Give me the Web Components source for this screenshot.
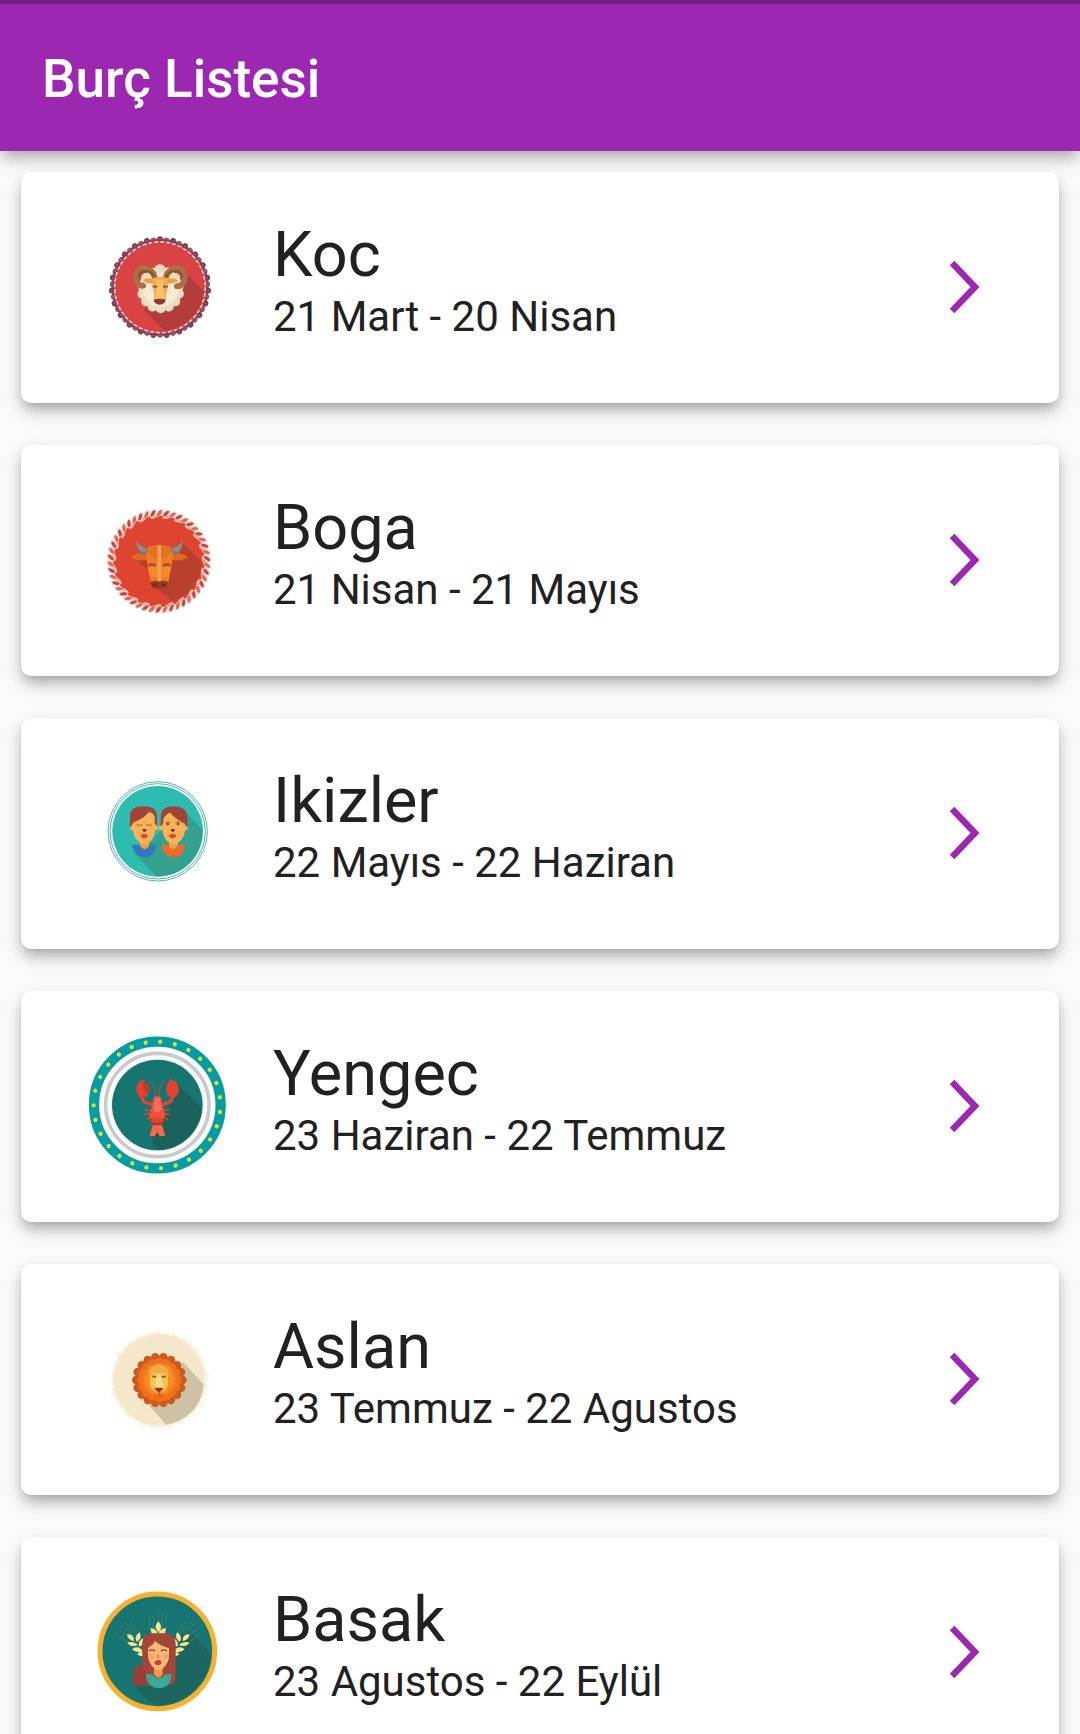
<!DOCTYPE html>
<html lang="tr">
<head>
<meta charset="utf-8">
<meta name="viewport" content="width=device-width, initial-scale=1">
<title>Burç Listesi</title>
<style>
  body { margin: 0; font-family: Roboto, "Noto Sans", sans-serif; color: #212121; background: #fafafa; }
</style>
</head>
<body>
<burc-app>
  <app-bar slot="bar">Burç Listesi</app-bar>
  <burc-card sign="koc">Koc<span slot="date">21 Mart - 20 Nisan</span></burc-card>
  <burc-card sign="boga">Boga<span slot="date">21 Nisan - 21 Mayıs</span></burc-card>
  <burc-card sign="ikizler">Ikizler<span slot="date">22 Mayıs - 22 Haziran</span></burc-card>
  <burc-card sign="yengec">Yengec<span slot="date">23 Haziran - 22 Temmuz</span></burc-card>
  <burc-card sign="aslan">Aslan<span slot="date">23 Temmuz - 22 Agustos</span></burc-card>
  <burc-card sign="basak">Basak<span slot="date">23 Agustos - 22 Eylül</span></burc-card>
</burc-app>

<script>
// Repeats a shape n times around a centre point.
const ring = (n, cx, cy, shape, start = 0) =>
  Array.from({ length: n }, (_, i) =>
    `<g transform="translate(${cx} ${cy}) rotate(${start + i * 360 / n})">${shape(i)}</g>`).join('');

const ART = {
  koc: { view: '0 -7 480 480', art: `
    <circle cx="240" cy="234" r="142" fill="none" stroke="#8a4a60" stroke-width="8"/>
    ${ring(46, 240, 234, i => `<circle cy="${i % 2 ? -142 : -145}" r="8.5" fill="${i % 2 ? '#8f4a60' : '#7b3c54'}"/><circle cy="-145" r="2.5" fill="#b0607a"/>`)}
    <circle cx="240" cy="234" r="138" fill="#d94343"/>
    <circle cx="240" cy="234" r="136" fill="none" stroke="#fbeaea" stroke-width="4" stroke-dasharray="11 6.8"/>
    <path d="M318 192 L371 246 A132 132 0 0 1 255 365 L190 302 Z" fill="#b33d3a"/>
    <g fill="#ecdcc0">
      <circle cx="240" cy="183" r="18"/><circle cx="217" cy="190" r="14"/><circle cx="264" cy="188" r="14"/>
      <ellipse cx="242" cy="238" rx="66" ry="62"/>
      ${ring(14, 242, 241, () => '<circle cy="-56" r="15"/>')}
    </g>
    <ellipse cx="242" cy="242" rx="53" ry="50" fill="#f5ead5"/>
    <g fill="none" stroke-linecap="round">
      <path d="M224 203 C214 168 168 168 168 204 C168 220 178 231 189 229" stroke="#ab6f45" stroke-width="18"/>
      <path d="M258 203 C268 168 314 168 314 204 C314 220 304 231 291 231" stroke="#ab6f45" stroke-width="18"/>
      <path d="M223 203 C212 178 177 182 176 202" stroke="#85552f" stroke-width="7"/>
      <path d="M259 203 C270 178 305 182 306 202" stroke="#85552f" stroke-width="7"/>
    </g>
    <path d="M188 215 C199 203 216 207 226 212 L226 223 Q205 225 188 215Z M294 215 C283 203 266 207 256 212 L256 223 Q277 225 294 215Z" fill="#f29b43"/>
    <path d="M218 207 Q241 198 264 207 L264 232 Q257 250 257 271 L223 271 Q224 250 218 232Z" fill="#f6aa50"/>
    <path d="M231 211 L249 211 L254 270 L227 270Z" fill="#fac06c"/>
    <path d="M218 232 h14 M249 232 h14" stroke="#8a4a2b" stroke-width="5"/>
    <path d="M221 271 Q239 266 257 271 Q255 285 239 286 Q223 285 221 271Z" fill="#93352c"/>` },

  boga: { view: '0 0 480 480', art: `
    <circle cx="237" cy="244" r="138" fill="#df4431"/>
    ${ring(46, 237, 244, i => `<path d="M-9 -139 Q0 -160 12 -154 Q10 -137 -5 -133Z" fill="${i % 2 ? '#c9463f' : '#e0685c'}" stroke="#fbd9d2" stroke-width="3"/><path d="M-8 -130 Q3 -141 12 -133 Q4 -126 -8 -130Z" fill="${i % 2 ? '#f6beb1' : '#df4431'}"/>`)}
    <path d="M303 184 L366 247 A130 130 0 0 1 279 364 L214 313 L239 259Z" fill="#b8402e"/>
    <path d="M158 230 L211 275 L197 220Z" fill="#b8402e"/>
    <path d="M153 231 Q178 212 206 226 L199 239 Q166 246 153 231Z M323 231 Q298 212 270 226 L277 239 Q310 246 323 231Z" fill="#e0691f"/>
    <path d="M170 180 Q177 203 205 201 L199 229 Q165 219 170 180Z M307 180 Q300 203 272 201 L278 229 Q312 219 307 180Z" fill="#7f766e"/>
    <path d="M170 180 Q169 212 192 218 L198 206 Q178 200 170 180Z M307 180 Q308 212 285 218 L279 206 Q299 200 307 180Z" fill="#978c83"/>
    <path d="M205 202 Q238 188 272 202 L280 225 L265 309 L213 309 L197 225Z" fill="#f17b22"/>
    <path d="M200 212 Q210 198 237 196 Q267 198 277 212 Q264 236 238 238 Q213 236 200 212Z" fill="#e57224"/>
    <path d="M202 262 H274 L266 290 H210Z" fill="#f58a2c"/>
    <path d="M233 196 h10 v108 h-10Z" fill="#f9a055"/>
    <path d="M206 256 q11 -6 20 1 M250 257 q11 -7 20 -1" fill="none" stroke="#a43b22" stroke-width="7"/>
    <path d="M210 307 Q223 298 237 305 Q252 298 266 307 L258 325 H218Z" fill="#923927"/>
    <path d="M220 314 h10 M246 314 h10" stroke="#612a25" stroke-width="6"/>` },

  ikizler: { view: '0 10 480 480', art: `
    <circle cx="233" cy="245" r="149" fill="#fff" stroke="#55b6a8" stroke-width="3"/>
    <circle cx="233" cy="245" r="143" fill="none" stroke="#55b6a8" stroke-width="3"/>
    <circle cx="233" cy="245" r="136" fill="#2fbcb0"/>
    <path d="M312 184 L367 240 A135 135 0 0 1 240 380 L228 379 L163 311 L210 278 L245 240Z" fill="#34a090"/>
    <path d="M156 285 H176 Q193 306 211 285 H230 Q224 323 193 323 Q162 321 156 285Z" fill="#3178bc"/>
    <path d="M244 285 H264 Q281 306 299 285 H316 Q310 323 280 323 Q250 321 244 285Z" fill="#ec6b26"/>
    <path d="M181 270 h26 v19 q-13 20 -26 0Z M267 270 h26 v19 q-13 20 -26 0Z" fill="#f0a045"/>
    <g fill="#fbb157">
      <path d="M155 190 H226 V240 Q222 278 193 284 Q164 278 158 241 Q147 242 151 226Z"/><circle cx="228" cy="234" r="7"/>
      <path d="M246 190 H316 V240 Q311 278 280 284 Q252 278 247 241Z"/><circle cx="243" cy="235" r="7"/><circle cx="317" cy="235" r="7"/>
    </g>
    <path d="M150 235 V199 Q150 170 190 170 Q230 168 231 200 V229 L224 221 V199 Q213 186 207 185 Q198 204 161 218Z" fill="#a04437"/>
    <path d="M242 231 V200 Q243 169 282 170 Q321 171 322 203 V234 L314 222 Q283 207 270 188 Q261 193 251 204 L249 222Z" fill="#a04437"/>
    <path d="M170 225 q9 5 17 0 M199 225 q9 5 17 0 M256 219 q8 -5 15 0 M286 219 q8 -5 15 0" fill="none" stroke="#a85a30" stroke-width="3"/>
    <circle cx="263" cy="223" r="4" fill="#80422c"/><circle cx="294" cy="223" r="4" fill="#80422c"/>
    <path d="M187 238 h13 l-3 8 h-7Z M272 238 h13 l-3 8 h-7Z" fill="#782f28"/>
    <path d="M182 257 Q193 248 204 257 Q202 267 193 266 Q184 267 182 257Z M267 257 Q278 248 289 257 Q287 267 278 266 Q269 267 267 257Z" fill="#d9472f"/>` },

  yengec: { view: '0 4 480 480', art: `
    <circle cx="232" cy="241" r="190" fill="#fff" stroke="#069ca4" stroke-width="31"/>
    ${ring(27, 231, 241, () => `<circle cy="-190" r="6.5" fill="#e0dc35"/>`, 3)}
    <circle cx="232" cy="241" r="155" fill="none" stroke="#cbcaca" stroke-width="11"/>
    <circle cx="232" cy="241" r="143" fill="#f3f5fa"/>
    <circle cx="232" cy="241" r="136" fill="#177571"/>
    <path d="M294 180 L365 252 A136 136 0 0 1 235 377 L218 365 L218 330 L246 285Z" fill="#1a625b"/>
    <g fill="none" stroke="#df4430" stroke-linecap="round">
      <path d="M228 217 Q229 188 211 170 M237 217 Q235 185 252 168" stroke-width="2.5"/>
      <path d="M185 218 L191 231 L218 240 M278 218 L272 231 L248 240" stroke-width="10"/>
      <path d="M196 256 L214 257 M267 256 L250 257 M196 269 L214 266 M267 269 L250 266 M202 284 L217 274 M262 284 L246 274" stroke-width="5"/>
    </g>
    <path d="M196 164 Q168 167 169 195 Q171 217 188 220 Q207 215 207 194 Q207 176 201 174 Q194 184 190 183Z M267 164 Q295 167 297 194 Q296 217 278 219 Q257 214 258 194 Q260 176 265 174Z" fill="#e4422f"/>
    <path d="M196 164 Q180 180 195 204 Q206 207 207 194 Q207 176 201 174 Q192 186 190 183Z" fill="#c9382a"/>
    <path d="M221 218 Q231 210 242 218 L256 274 Q245 289 231 291 Q217 288 208 274Z" fill="#ed513c"/>
    <path d="M225 220 H239 L245 256 Q232 270 219 256Z" fill="#f96d55"/>
    <path d="M211 278 Q231 286 252 278 L248 300 Q231 305 215 300Z" fill="#df4430"/>
    <path d="M213 291 Q231 297 250 291 L248 302 Q231 307 215 302Z" fill="#b9352a"/>
    <path d="M219 302 H246 L256 333 L239 335 L232 321 L224 335 L208 333Z" fill="#fa674a"/>` },

  aslan: { view: '0 -1 480 480', art: `
    ${ring(64, 238, 242, i => `<path d="M-9 -134 L${i % 2 ? 3 : -4} ${i % 3 ? -149 : -155} L9 -134Z" fill="#fbf3e1"/>`)}
    <circle cx="237" cy="241" r="138" fill="#f6ebd2"/>
    <circle cx="237" cy="241" r="134" fill="#f4e7cb"/>
    <path d="M309 188 L371 256 Q359 354 259 376 L190 300Z" fill="#cdc2a6"/>
    ${ring(18, 238, 242, () => '<circle cy="-69" r="13" fill="#cc5a1d"/>', 10)}
    <circle cx="238" cy="242" r="65" fill="#df631d"/>
    ${ring(16, 238, 242, () => '<circle cy="-53" r="13" fill="#f0701d"/>')}
    <circle cx="238" cy="242" r="51" fill="#f47a1f"/>
    ${ring(14, 238, 242, () => '<circle cy="-35" r="11" fill="#f88a26"/>')}
    <circle cx="213" cy="207" r="11" fill="#e88c28"/><circle cx="261" cy="207" r="11" fill="#e88c28"/>
    <path d="M208 212 Q237 178 266 212 L263 259 Q257 279 237 280 Q216 278 210 259Z" fill="#efad40"/>
    <path d="M223 217 L235 229 L234 263 L221 272 Q206 259 211 234Z M252 217 L240 229 L241 263 L254 272 Q269 259 263 234Z" fill="#f4c24f"/>
    <path d="M230 225 Q237 218 244 225 L251 268 H223Z" fill="#f6d783"/>
    <path d="M217 232 h12 M245 232 h12" stroke="#955222" stroke-width="5"/>
    <path d="M223 265 H250 Q247 273 239 278 V290 H236 V278 Q226 274 223 265Z" fill="#843c21"/>
    <path d="M220 282 Q230 291 237 282 Q245 291 255 282 Q247 299 237 294 Q227 298 220 282Z" fill="#e5671c"/>` },

  basak: { view: '0 -4 480 480', art: `
    <circle cx="232" cy="234" r="172" fill="#177571" stroke="#f5b230" stroke-width="15"/>
    <path d="M325 170 L391 239 A163 163 0 0 1 241 397 L210 385 L158 333 L235 230Z" fill="#1b665e"/>
    <g stroke="#438b79" stroke-width="2">
      <path d="M209 119 V168 M221 122 V165 M235 106 V146 M247 122 V165 M259 122 V168"/>
      <path d="M108 181 L143 208 M116 166 L149 193 M121 150 L157 184 M135 145 L164 178 M151 146 L175 177 M359 181 L326 208 M350 166 L320 193 M344 150 L312 183 M332 145 L303 178 M317 146 L293 177"/>
    </g>
    <g fill="#f4e58f">
      <path d="M235 144 Q252 162 235 177 Q219 160 235 144Z M211 165 Q229 165 234 182 L215 181Z M258 165 Q240 165 235 182 L255 181Z"/>
      <path d="M141 183 Q163 181 162 203 Q144 201 141 183Z M179 177 Q188 194 170 206 Q161 188 179 177Z M141 208 Q160 201 174 215 Q154 224 141 208Z M190 195 Q196 214 178 220 Q171 203 190 195Z M156 228 Q170 215 186 229 L187 235 Q168 240 156 228Z M171 243 Q183 230 193 239 V249 Q180 251 171 243Z"/>
      <path transform="translate(470 0) scale(-1 1)" d="M141 183 Q163 181 162 203 Q144 201 141 183Z M179 177 Q188 194 170 206 Q161 188 179 177Z M141 208 Q160 201 174 215 Q154 224 141 208Z M190 195 Q196 214 178 220 Q171 203 190 195Z M156 228 Q170 215 186 229 L187 235 Q168 240 156 228Z M171 243 Q183 230 193 239 V249 Q180 251 171 243Z"/>
    </g>
    <path d="M187 286 V214 Q186 181 218 180 H253 Q287 181 287 215 V314 Q285 334 270 336 H167 Q160 339 159 333 V302 Q162 275 187 275Z" fill="#a34638"/>
    <path d="M159 333 V302 Q162 275 187 275 L199 305 L207 332Z" fill="#963f34"/>
    <path d="M197 303 H216 Q237 327 256 303 H276 Q273 344 236 345 Q200 343 197 303Z" fill="#3aa798"/>
    <path d="M222 280 H248 V303 Q236 324 222 303Z" fill="#ef9a42"/>
    <path d="M204 223 Q220 216 225 203 Q240 217 267 225 V253 Q260 284 236 291 Q211 284 204 252Z" fill="#fdba75"/>
    <path d="M207 233 q8 -7 18 0 M243 233 q8 -7 18 0" fill="none" stroke="#7e3c2d" stroke-width="4"/>
    <circle cx="215" cy="250" r="8" fill="#f9a36b"/><circle cx="257" cy="250" r="8" fill="#f9a36b"/>
    <path d="M233 237 L229 255 H240Z" fill="#e9914b"/>
    <path d="M222 268 Q229 258 234 261 Q241 258 246 268 Q234 284 222 268Z" fill="#d03e34"/>` },
};

class BurcApp extends HTMLElement {
  constructor() {
    super();
    this.attachShadow({ mode: 'open' }).innerHTML = `
      <style>
        :host { display: flex; flex-direction: column; height: 100vh; background: #fafafa; }
        main { flex: 1; min-height: 0; overflow-y: auto; scrollbar-width: none; box-sizing: border-box;
               padding: 21px; display: flex; flex-direction: column; gap: 42px; }
      </style>
      <slot name="bar"></slot>
      <main><slot></slot></main>`;
  }
}

class AppBar extends HTMLElement {
  constructor() {
    super();
    this.attachShadow({ mode: 'open' }).innerHTML = `
      <style>
        :host { display: block; flex: none; position: relative; z-index: 1; background: #9c27b0; color: #fff;
                border-top: 4px solid #751d84;
                box-shadow: 0 8px 13px -3px rgba(0,0,0,.22), 0 8px 18px rgba(0,0,0,.14); }
        h1 { margin: 0; padding: 44px 42px 40px; font-size: 53px; line-height: 63px; font-weight: 500; }
      </style>
      <header><h1><slot></slot></h1></header>`;
  }
}

class BurcIcon extends HTMLElement {
  constructor() {
    super();
    this.attachShadow({ mode: 'open' });
  }
  connectedCallback() {
    const { view, art } = ART[this.getAttribute('sign')];
    this.shadowRoot.innerHTML = `
      <style>:host { display: block; flex: none; } svg { display: block; }</style>
      <svg width="160" height="160" viewBox="${view}" aria-hidden="true">${art}</svg>`;
  }
}

class BurcCard extends HTMLElement {
  constructor() {
    super();
    this.attachShadow({ mode: 'open' });
  }
  connectedCallback() {
    const sign = this.getAttribute('sign');
    this.shadowRoot.innerHTML = `
      <style>
        :host { display: block; flex: none; }
        a { display: flex; align-items: center; gap: 33px; min-height: 231px; box-sizing: border-box;
            padding: 0 79px 1px 59px; border-radius: 10px; background: #fff; color: inherit; text-decoration: none;
            box-shadow: 0 8px 13px -3px rgba(0,0,0,.22), 0 8px 18px rgba(0,0,0,.16), 0 1px 3px rgba(0,0,0,.05); }
        .text { flex: 1; min-width: 0; padding-bottom: 16px; }
        h2 { margin: 0; font-size: 63px; line-height: 74px; font-weight: 400; }
        p { margin: 0; font-size: 42px; line-height: 49px; }
        .chevron { flex: none; display: block; }
      </style>
      <a href="#${sign}">
        <burc-icon sign="${sign}"></burc-icon>
        <div class="text"><h2><slot></slot></h2><p><slot name="date"></slot></p></div>
        <svg class="chevron" width="30" height="52" viewBox="0 0 30 52" aria-hidden="true">
          <path d="M2 2 L25 26 L2 50" fill="none" stroke="#9c27b0" stroke-width="6.5"/>
        </svg>
      </a>`;
  }
}

customElements.define('burc-icon', BurcIcon);
customElements.define('burc-card', BurcCard);
customElements.define('app-bar', AppBar);
customElements.define('burc-app', BurcApp);
</script>
</body>
</html>
